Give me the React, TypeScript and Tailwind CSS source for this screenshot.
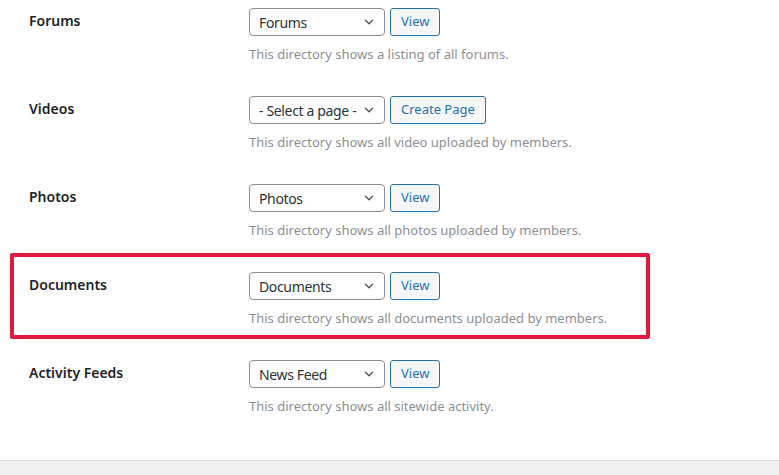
import { ChevronDown } from "lucide-react";

type Row = {
  label: string;
  value: string;
  action: string;
  help: string;
  marked?: boolean;
};

const ROWS: Row[] = [
  { label: "Forums", value: "Forums", action: "View", help: "This directory shows a listing of all forums." },
  { label: "Videos", value: "- Select a page -", action: "Create Page", help: "This directory shows all video uploaded by members." },
  { label: "Photos", value: "Photos", action: "View", help: "This directory shows all photos uploaded by members." },
  { label: "Documents", value: "Documents", action: "View", help: "This directory shows all documents uploaded by members.", marked: true },
  { label: "Activity Feeds", value: "News Feed", action: "View", help: "This directory shows all sitewide activity." },
];

function SettingRow({ row }: { row: Row }) {
  return (
    <div className="relative flex h-[88px]">
      {/* hand-drawn highlight */}
      {row.marked && (
        <div className="pointer-events-none absolute left-[10px] top-[-19px] h-[86px] w-[640px] rounded-[2px] border-[4px] border-[#e3193b]" />
      )}
      <div className="w-[249px] pl-[29px] pt-[2px] text-[14px] font-semibold text-[#1d2327]">{row.label}</div>
      <div>
        <div className="flex items-center gap-[5px]">
          <div className="flex h-[28px] w-[136px] items-center justify-between rounded-[4px] border border-[#8c8f94] bg-white pl-[9px] pr-[8px] text-[14px] text-[#2c3338]">
            <span className="whitespace-nowrap tracking-[-0.35px]">{row.value}</span>
            <ChevronDown size={14} strokeWidth={2.5} className="shrink-0 text-[#50575e]" />
          </div>
          <button className="h-[28px] rounded-[3px] border border-[#2271b1] bg-[#f6f7f7] px-[10px] text-[13px] text-[#2271b1]">
            {row.action}
          </button>
        </div>
        <p className="mt-[9px] text-[13px] text-[#8c8f94]">{row.help}</p>
      </div>
    </div>
  );
}

export default function App() {
  return (
    <div className="flex h-[475px] w-[779px] flex-col bg-white font-['Noto_Sans',sans-serif]">
      <div className="flex-1 pt-[8px]">
        {ROWS.map((row) => (
          <SettingRow key={row.label} row={row} />
        ))}
      </div>
      <div className="h-[15px] border-t border-[#dcdcde] bg-[#f0f0f1]" />
    </div>
  );
}
